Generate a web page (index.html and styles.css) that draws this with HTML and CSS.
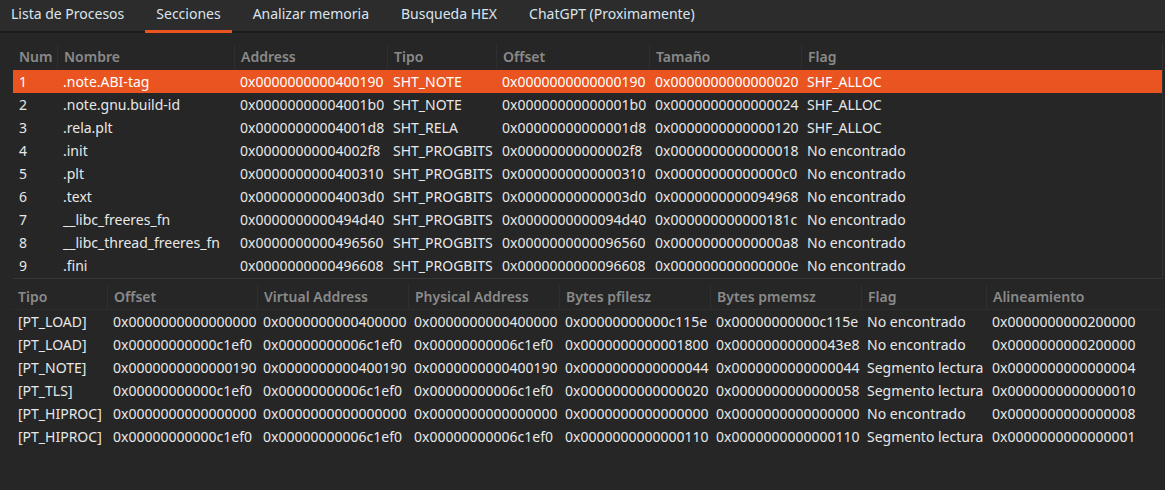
FILE: index.html
```html
<!DOCTYPE html>
<html lang="es">
<head>
<meta charset="utf-8">
<title>Secciones</title>
<link rel="stylesheet" href="styles.css">
</head>
<body>
<nav class="tabs">
  <div class="tab">Lista de Procesos</div>
  <div class="tab active">Secciones</div>
  <div class="tab">Analizar memoria</div>
  <div class="tab">Busqueda HEX</div>
  <div class="tab">ChatGPT (Proximamente)</div>
</nav>
<main class="content">
  <section class="sections">
    <div class="row head">
      <div>Num</div><div>Nombre</div><div>Address</div><div>Tipo</div><div>Offset</div><div>Tamaño</div><div>Flag</div>
    </div>
    <div class="row selected"><div>1</div><div>.note.ABI-tag</div><div>0x0000000000400190</div><div>SHT_NOTE</div><div>0x0000000000000190</div><div>0x0000000000000020</div><div>SHF_ALLOC</div></div>
    <div class="row"><div>2</div><div>.note.gnu.build-id</div><div>0x00000000004001b0</div><div>SHT_NOTE</div><div>0x00000000000001b0</div><div>0x0000000000000024</div><div>SHF_ALLOC</div></div>
    <div class="row"><div>3</div><div>.rela.plt</div><div>0x00000000004001d8</div><div>SHT_RELA</div><div>0x00000000000001d8</div><div>0x0000000000000120</div><div>SHF_ALLOC</div></div>
    <div class="row"><div>4</div><div>.init</div><div>0x00000000004002f8</div><div>SHT_PROGBITS</div><div>0x00000000000002f8</div><div>0x0000000000000018</div><div>No encontrado</div></div>
    <div class="row"><div>5</div><div>.plt</div><div>0x0000000000400310</div><div>SHT_PROGBITS</div><div>0x0000000000000310</div><div>0x00000000000000c0</div><div>No encontrado</div></div>
    <div class="row"><div>6</div><div>.text</div><div>0x00000000004003d0</div><div>SHT_PROGBITS</div><div>0x00000000000003d0</div><div>0x0000000000094968</div><div>No encontrado</div></div>
    <div class="row"><div>7</div><div>__libc_freeres_fn</div><div>0x0000000000494d40</div><div>SHT_PROGBITS</div><div>0x0000000000094d40</div><div>0x000000000000181c</div><div>No encontrado</div></div>
    <div class="row"><div>8</div><div>__libc_thread_freeres_fn</div><div>0x0000000000496560</div><div>SHT_PROGBITS</div><div>0x0000000000096560</div><div>0x00000000000000a8</div><div>No encontrado</div></div>
    <div class="row"><div>9</div><div>.fini</div><div>0x0000000000496608</div><div>SHT_PROGBITS</div><div>0x0000000000096608</div><div>0x000000000000000e</div><div>No encontrado</div></div>
  </section>
  <section class="segments">
    <div class="row head">
      <div>Tipo</div><div>Offset</div><div>Virtual Address</div><div>Physical Address</div><div>Bytes pfilesz</div><div>Bytes pmemsz</div><div>Flag</div><div>Alineamiento</div>
    </div>
    <div class="row"><div>[PT_LOAD]</div><div>0x0000000000000000</div><div>0x0000000000400000</div><div>0x0000000000400000</div><div>0x00000000000c115e</div><div>0x00000000000c115e</div><div>No encontrado</div><div>0x0000000000200000</div></div>
    <div class="row"><div>[PT_LOAD]</div><div>0x00000000000c1ef0</div><div>0x00000000006c1ef0</div><div>0x00000000006c1ef0</div><div>0x0000000000001800</div><div>0x00000000000043e8</div><div>No encontrado</div><div>0x0000000000200000</div></div>
    <div class="row"><div>[PT_NOTE]</div><div>0x0000000000000190</div><div>0x0000000000400190</div><div>0x0000000000400190</div><div>0x0000000000000044</div><div>0x0000000000000044</div><div>Segmento lectura</div><div>0x0000000000000004</div></div>
    <div class="row"><div>[PT_TLS]</div><div>0x00000000000c1ef0</div><div>0x00000000006c1ef0</div><div>0x00000000006c1ef0</div><div>0x0000000000000020</div><div>0x0000000000000058</div><div>Segmento lectura</div><div>0x0000000000000010</div></div>
    <div class="row"><div>[PT_HIPROC]</div><div>0x0000000000000000</div><div>0x0000000000000000</div><div>0x0000000000000000</div><div>0x0000000000000000</div><div>0x0000000000000000</div><div>No encontrado</div><div>0x0000000000000008</div></div>
    <div class="row"><div>[PT_HIPROC]</div><div>0x00000000000c1ef0</div><div>0x00000000006c1ef0</div><div>0x00000000006c1ef0</div><div>0x0000000000000110</div><div>0x0000000000000110</div><div>Segmento lectura</div><div>0x0000000000000001</div></div>
  </section>
</main>
</body>
</html>
```

FILE: styles.css
```css
html, body {
  margin: 0;
  padding: 0;
  background: #262626;
  height: 100%;
}
body {
  font-family: "Noto Sans", "Open Sans", sans-serif;
  font-size: 14px;
  color: #e8e8e8;
  overflow: hidden;
}
.tabs {
  display: flex;
  height: 31px;
  background: #2c2c2c;
  border-bottom: 2px solid #1c1c1c;
  gap: 10px;
}
.tab {
  padding: 0 11px;
  line-height: 28px;
  color: #dbe4ed;
  white-space: nowrap;
  position: relative;
}
.tab.active::after {
  content: "";
  position: absolute;
  left: 0;
  right: 0;
  bottom: -2px;
  height: 3px;
  background: #e95420;
}
.content {
  padding: 12px 2px 0 13px;
}
.row {
  display: grid;
  height: 23px;
  line-height: 23px;
  white-space: nowrap;
}
.sections .row {
  grid-template-columns: 44px 177px 153px 109px 153px 152px 1fr;
}
.segments .row {
  grid-template-columns: 94px 150px 151px 151px 151px 151px 125px 1fr;
}
.row > div {
  padding-left: 6px;
  overflow: hidden;
}
.segments .row > div:first-child {
  padding-left: 5px;
}
.row.head {
  height: 24px;
  line-height: 24px;
  font-weight: 600;
  color: #8a8a8a;
}
.row.head > div + div {
  border-left: 1px solid #2f2f2f;
}
.sections .row.head {
  margin-bottom: 1px;
}
.row.selected {
  background: #e95420;
  color: #ffffff;
}
.sections {
  padding-bottom: 1px;
  border-right: 1px solid #343434;
  border-bottom: 1px solid #363636;
}
.segments {
  padding-top: 6px;
}
.segments .row.head {
  border-bottom: 1px solid #2d2d2d;
}
```
